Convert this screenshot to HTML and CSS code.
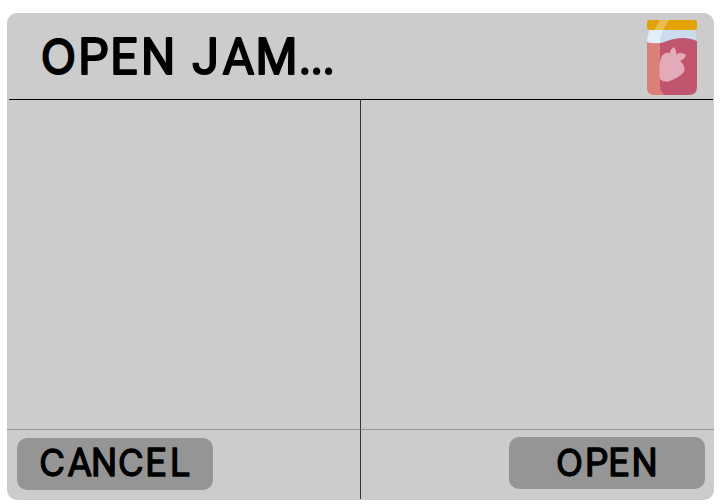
FILE: index.html
```html
<!DOCTYPE html>
<html lang="en">
<head>
<meta charset="utf-8">
<title>Open Jam</title>
<link rel="stylesheet" href="styles.css">
</head>
<body>
<main class="dialog">
  <header class="header">
    <h1 class="title">
      <svg class="lettering large" width="320" height="86">
        <text transform="scale(.95 1)" y="61" x="33.3 73 106.5 139 160 193 225 259.5 305 317.5 330"><tspan class="round">O</tspan>PEN JAM...</text>
      </svg>
    </h1>
    <svg class="jar" viewBox="0 0 50 75" aria-hidden="true">
      <path fill="#c9dded" d="M2 10H48C48 15 50 16 50 21V67Q50 75 42 75H9Q0 75 0 67V21C0 16 2 15 2 10Z"/>
      <path fill="#c2556e" d="M0 22C12 26 18 21 27 19C36 17 43 18 50 21V67Q50 75 42 75H9Q0 75 0 67Z"/>
      <path fill="#db8078" d="M0 22Q6 24 13 23V67Q13 72 18 75H8Q0 75 0 67Z"/>
      <path fill="#e2eef8" d="M2 10H16Q13 16 13 23Q6 24 0 22C0 17 2 15 2 10Z"/>
      <rect width="50" height="10" rx="2.5" fill="#e3a308"/>
      <path fill="#e9bd51" d="M13 0H22L16 10H7Z"/>
      <path fill="#e3abb9" d="M14 38C15 34 19 32 23 33C23 30 25 28 27 27C29 30 30 33 29 35C32 32 36 33 39 35C38 38 36 40 33 41C38 45 39 51 35 54C32 57 27 59 23 61Q17 63 13 59Q12 55 12.5 50Q12 43 14 38Z"/>
    </svg>
  </header>
  <section class="pane"></section>
  <section class="pane right"></section>
  <footer class="actions">
    <button class="button" type="button">
      <svg class="lettering small" width="196" height="52">
        <text transform="scale(.95 1)" y="38.3" x="23.3 53.5 78 106.3 135 161"><tspan class="round">C</tspan>AN<tspan class="round">C</tspan>EL</text>
      </svg>
    </button>
  </footer>
  <footer class="actions right end">
    <button class="button" type="button">
      <svg class="lettering small" width="196" height="52">
        <text transform="scale(.95 1)" y="39.3" x="49.5 80 104.5 129"><tspan class="round">O</tspan>PEN</text>
      </svg>
    </button>
  </footer>
</main>
</body>
</html>
```
FILE: styles.css
```css
* { box-sizing: border-box; }
body { margin: 0; background: #fff; font-family: Roboto, "Liberation Sans", sans-serif; }
.dialog {
  display: grid;
  grid-template: 87px 329px 71px / 353px 354px;
  width: 707px;
  height: 487px;
  margin: 13px 0 0 7px;
  border-radius: 10px;
  background: #ccc;
}
.header {
  grid-column: 1 / -1;
  display: flex;
  justify-content: space-between;
  margin: 0 1px 0 2px;
  border-bottom: 1px solid #000;
}
.title { margin: 0; font-weight: 400; }
.lettering { display: block; overflow: visible; stroke: #000; stroke-linejoin: round; }
.large { font-size: 50.6px; stroke-width: 2px; }
.small { font-size: 38.6px; stroke-width: 1.3px; }
.round { font-family: Inter, Roboto, sans-serif; font-size: .96em; }
.jar { width: 50px; height: 75px; margin: 7px 16px 0 0; }
.right { border-left: 1px solid #303335; }
.actions {
  padding: 8px 0 0 10px;
  border-top: 1px solid #959595;
}
.end {
  display: flex;
  justify-content: flex-end;
  align-items: flex-start;
  margin-bottom: 1px;
  padding: 7px 9px 0 0;
}
.button {
  display: block;
  width: 196px;
  height: 52px;
  padding: 0;
  border: 0;
  border-radius: 10px;
  background: #959595;
  font: inherit;
}
```
